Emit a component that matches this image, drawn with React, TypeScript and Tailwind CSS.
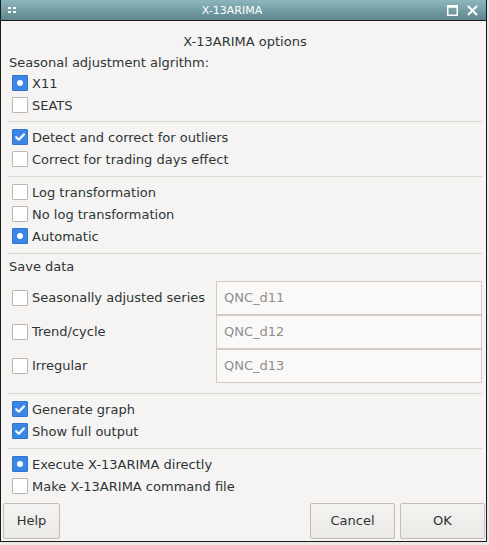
import type { ReactNode } from 'react';

type Kind = 'check' | 'radio';

function Box({ kind, on }: { kind: Kind; on: boolean }) {
  if (!on) {
    return <span className="w-4 h-4 shrink-0 bg-white border border-[#bcb6ae] rounded-[1px]" />;
  }
  return (
    <span className="w-4 h-4 shrink-0 bg-[#3b86e2] border border-[#2f74cc] rounded-[1px] flex items-center justify-center">
      {kind === 'radio' ? (
        <span className="w-[6px] h-[6px] rounded-full bg-white" />
      ) : (
        <svg width="12" height="12" viewBox="0 0 12 12">
          <path d="M2.2 6.2 L4.8 8.7 L9.9 3.4" fill="none" stroke="white" strokeWidth="2.2" strokeLinecap="round" strokeLinejoin="round" />
        </svg>
      )}
    </span>
  );
}

function Option({ kind, on = false, flat = false, children }: { kind: Kind; on?: boolean; flat?: boolean; children: ReactNode }) {
  return (
    <div className="h-[22px] flex items-center gap-1 pl-1">
      <Box kind={kind} on={on} />
      <span className={flat ? 'whitespace-nowrap' : 'whitespace-nowrap pt-[2px]'}>{children}</span>
    </div>
  );
}

function Sep({ className }: { className: string }) {
  return <div className={`h-px bg-[#dad6d1] ${className}`} />;
}

function SaveRow({ label, value }: { label: string; value: string }) {
  return (
    <div className="flex items-center">
      <div className="w-[208px] shrink-0">
        <Option kind="check" flat>{label}</Option>
      </div>
      <div className="flex-1 h-[34px] border border-[#d0cbc5] bg-[#faf9f8] flex items-center pl-[7px] text-[#8e8e8e]">
        {value}
      </div>
    </div>
  );
}

function Btn({ children, w }: { children: ReactNode; w: string }) {
  return (
    <button className={`${w} h-[36px] border border-[#c3bdb6] rounded-[2px] bg-gradient-to-b from-[#f4f3f1] to-[#ebe9e6] text-[#2e3436]`}>
      {children}
    </button>
  );
}

export default function App() {
  return (
    <div className="w-[489px] h-[545px] bg-[#e9e8e6]" style={{ fontFamily: '"DejaVu Sans", sans-serif' }}>
      <div className="w-[487px] h-[542px] border-l border-r border-b border-[#1b1b1b] bg-[#f5f4f2] flex flex-col text-[13px] text-[#2e3436]">
        {/* Title bar */}
        <div className="h-[21px] shrink-0 border-b border-[#1b1b1b] bg-gradient-to-b from-[#8db6bc] to-[#5d868e] flex items-center px-[6px] text-white">
          <svg width="10" height="8" viewBox="0 0 10 8" className="shrink-0">
            <rect x="1" y="1" width="3" height="2" fill="white" />
            <rect x="6" y="1" width="3" height="2" fill="white" />
            <rect x="1" y="5" width="3" height="2" fill="white" />
            <rect x="6" y="5" width="3" height="2" fill="white" />
          </svg>
          <div className="flex-1 text-center text-[11px] leading-none">X-13ARIMA</div>
          <div className="flex items-center gap-[9px] pr-[2px]">
            <svg width="11" height="11" viewBox="0 0 11 11">
              <rect x="0.75" y="0.75" width="9.5" height="9.5" fill="none" stroke="white" strokeWidth="1.5" />
              <rect x="0.75" y="0.75" width="9.5" height="2" fill="white" />
            </svg>
            <svg width="11" height="11" viewBox="0 0 11 11">
              <path d="M1 1 L10 10 M10 1 L1 10" stroke="white" strokeWidth="2" />
            </svg>
          </div>
        </div>

        {/* Content */}
        <div className="pl-[7px] pr-[4px] flex flex-col">
          <div className="mt-[12px] h-[18px] leading-[18px] text-center">X-13ARIMA options</div>
          <div className="mt-[3px] h-[18px] leading-[18px] pl-[1px]">Seasonal adjustment algrithm:</div>
          <Option kind="radio" on>X11</Option>
          <Option kind="check">SEATS</Option>

          <Sep className="mt-[5px]" />
          <div className="mt-[4px]">
            <Option kind="check" on>Detect and correct for outliers</Option>
            <Option kind="check">Correct for trading days effect</Option>
          </div>

          <Sep className="mt-[6px]" />
          <div className="mt-[4px]">
            <Option kind="check">Log transformation</Option>
            <Option kind="check">No log transformation</Option>
            <Option kind="radio" on>Automatic</Option>
          </div>

          <Sep className="mt-[6px]" />
          <div className="mt-[4px] h-[18px] leading-[18px] pl-[1px]">Save data</div>
          <div className="mt-[5px] flex flex-col">
            <SaveRow label="Seasonally adjusted series" value="QNC_d11" />
            <SaveRow label="Trend/cycle" value="QNC_d12" />
            <SaveRow label="Irregular" value="QNC_d13" />
          </div>

          <Sep className="mt-[10px]" />
          <div className="mt-[4px]">
            <Option kind="check" on>Generate graph</Option>
            <Option kind="check" on>Show full output</Option>
          </div>

          <Sep className="mt-[6px]" />
          <div className="mt-[4px]">
            <Option kind="radio" on>Execute X-13ARIMA directly</Option>
            <Option kind="check">Make X-13ARIMA command file</Option>
          </div>
        </div>

        {/* Buttons */}
        <div className="mt-[6px] pl-[2px] pr-[1px] flex items-center gap-[5px]">
          <Btn w="w-[57px]">Help</Btn>
          <div className="flex-1" />
          <Btn w="w-[85px]">Cancel</Btn>
          <Btn w="w-[85px]">OK</Btn>
        </div>
      </div>
    </div>
  );
}
